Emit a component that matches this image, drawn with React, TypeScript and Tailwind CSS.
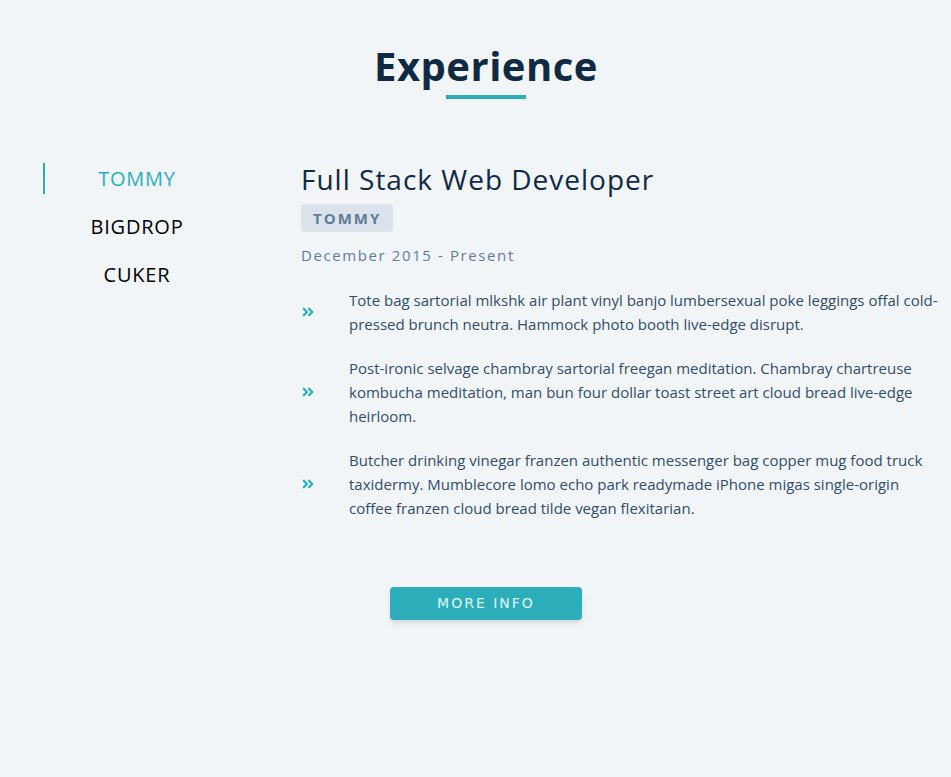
import { FaAngleDoubleRight } from 'react-icons/fa';

const jobs = [
  { company: 'TOMMY' },
  { company: 'BIGDROP' },
  { company: 'CUKER' },
];

const duties = [
  'Tote bag sartorial mlkshk air plant vinyl banjo lumbersexual poke leggings offal cold-pressed brunch neutra. Hammock photo booth live-edge disrupt.',
  'Post-ironic selvage chambray sartorial freegan meditation. Chambray chartreuse kombucha meditation, man bun four dollar toast street art cloud bread live-edge heirloom.',
  'Butcher drinking vinegar franzen authentic messenger bag copper mug food truck taxidermy. Mumblecore lomo echo park readymade iPhone migas single-origin coffee franzen cloud bread tilde vegan flexitarian.',
];

const App = () => {
  const active = 0;

  return (
    <section className="min-h-screen w-full bg-[#f1f5f8] pt-[41px] font-['Open_Sans',sans-serif]">
      <div className="pl-[21px] text-center">
        <h2 className="text-[40px] leading-[50px] font-bold tracking-[0.5px] text-[#102a43]">Experience</h2>
        <div className="mx-auto mt-[4px] h-1 w-20 bg-[#2caeba]" />
      </div>

      <div className="mt-[64px] flex pl-[43px]">
        <div className="flex w-[186px] flex-col">
          {jobs.map((job, index) => (
            <button
              key={index}
              className={`mb-[17px] border-l-2 py-1 text-[20px] leading-[23px] tracking-[0.8px] ${
                index === active ? 'border-[#2caeba] text-[#2caeba]' : 'border-transparent text-black'
              }`}
            >
              {job.company}
            </button>
          ))}
        </div>

        <article className="ml-[72px] w-[640px]">
          <h3 className="-mt-[2px] text-[28px] leading-[36px] font-normal tracking-[1px] text-[#102a43]">Full Stack Web Developer</h3>
          <h4 className="mt-[7px] inline-block rounded bg-[#dae2ec] px-3 text-[15px] leading-[28px] font-bold tracking-[2px] text-[#617d98]">
            TOMMY
          </h4>
          <p className="mt-[12px] text-[15px] leading-[22px] tracking-[1.6px] text-[#617d98]">December 2015 - Present</p>

          <div className="mt-[22px] flex flex-col gap-5">
            {duties.map((duty, index) => (
              <div key={index} className="flex items-center">
                <FaAngleDoubleRight className="h-[14px] w-[14px] shrink-0 text-[#2caeba]" />
                <p className="ml-[34px] text-[15px] leading-6 text-[#334e68]">{duty}</p>
              </div>
            ))}
          </div>
        </article>
      </div>

      <div className="mt-[67px] flex justify-center pl-[21px]">
        <button className="h-[33px] w-[192px] rounded bg-[#2caeba] font-['DejaVu_Sans',sans-serif] text-[14px] tracking-[2px] text-[#e0f7f9] shadow-md">
          MORE INFO
        </button>
      </div>
    </section>
  );
};

export default App;
